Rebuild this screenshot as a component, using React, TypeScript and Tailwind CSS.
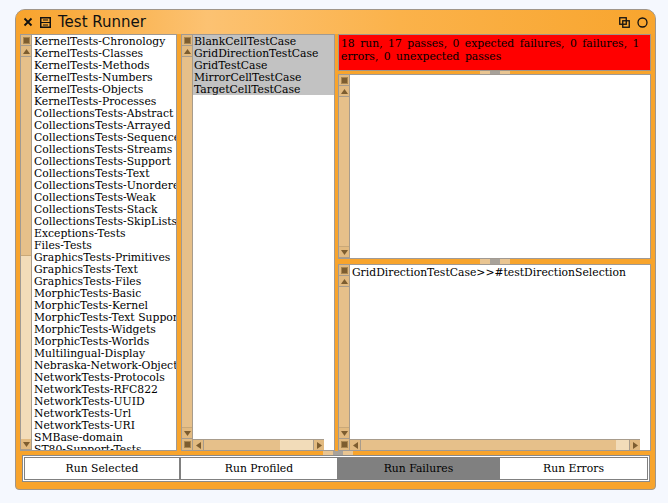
import React from 'react'

const categories = [
  'KernelTests-Chronology',
  'KernelTests-Classes',
  'KernelTests-Methods',
  'KernelTests-Numbers',
  'KernelTests-Objects',
  'KernelTests-Processes',
  'CollectionsTests-Abstract',
  'CollectionsTests-Arrayed',
  'CollectionsTests-Sequenceable',
  'CollectionsTests-Streams',
  'CollectionsTests-Support',
  'CollectionsTests-Text',
  'CollectionsTests-Unordered',
  'CollectionsTests-Weak',
  'CollectionsTests-Stack',
  'CollectionsTests-SkipLists',
  'Exceptions-Tests',
  'Files-Tests',
  'GraphicsTests-Primitives',
  'GraphicsTests-Text',
  'GraphicsTests-Files',
  'MorphicTests-Basic',
  'MorphicTests-Kernel',
  'MorphicTests-Text Support',
  'MorphicTests-Widgets',
  'MorphicTests-Worlds',
  'Multilingual-Display',
  'Nebraska-Network-Objects',
  'NetworkTests-Protocols',
  'NetworkTests-RFC822',
  'NetworkTests-UUID',
  'NetworkTests-Url',
  'NetworkTests-URI',
  'SMBase-domain',
  'ST80-Support-Tests',
]

const classes = [
  'BlankCellTestCase',
  'GridDirectionTestCase',
  'GridTestCase',
  'MirrorCellTestCase',
  'TargetCellTestCase',
]

const font = "font-['DejaVu_Serif',serif] text-[10.8px] leading-[12px] text-black"

type Glyph = 'square' | 'up' | 'down' | 'left' | 'right'

function Icon({ kind }: { kind: Glyph }) {
  if (kind === 'square')
    return (
      <svg width="7" height="7" viewBox="0 0 7 7">
        <rect x="0.5" y="0.5" width="6" height="6" fill="#7d5d2f" stroke="#a98650" />
      </svg>
    )
  const pts = {
    up: '0,6 3.5,1 7,6',
    down: '0,1 3.5,6 7,1',
    left: '6,0 1,3.5 6,7',
    right: '1,0 6,3.5 1,7',
  }[kind]
  return (
    <svg width="7" height="7" viewBox="0 0 7 7">
      <polygon points={pts} fill="#7d5d2f" />
    </svg>
  )
}

function VBtn({ kind }: { kind: Glyph }) {
  return (
    <div className="h-[11px] w-full shrink-0 flex items-center justify-center bg-[#e2ba80] border-b border-[#a89c8c]">
      <Icon kind={kind} />
    </div>
  )
}

function HBtn({ kind }: { kind: Glyph }) {
  return (
    <div className="w-[11px] h-full shrink-0 flex items-center justify-center bg-[#e2ba80] border-r border-[#a89c8c]">
      <Icon kind={kind} />
    </div>
  )
}

// thumb: fraction of the track shown dark (the rest is the lighter track)
function VScroll({ thumb = 1, corner = false }: { thumb?: number; corner?: boolean }) {
  return (
    <div className="w-[11px] shrink-0 flex flex-col bg-[#e6c08a] border-r border-[#a89c8c]">
      <VBtn kind="square" />
      <VBtn kind="up" />
      <div className="flex-1 flex flex-col">
        <div className="bg-[#e6c08a] border-b border-[#c9a878]" style={{ flexGrow: thumb }} />
        <div className="bg-[#f2dcb9]" style={{ flexGrow: 1 - thumb }} />
      </div>
      <VBtn kind="down" />
      {corner && <div className="h-[11px] shrink-0 flex items-center justify-center bg-[#e2ba80]"><Icon kind="square" /></div>}
    </div>
  )
}

function HScroll({ thumb }: { thumb: number }) {
  return (
    <div className="h-[11px] shrink-0 flex bg-white">
      <div className="flex-1 flex bg-[#e6c08a] border-t border-[#a89c8c]">
        <HBtn kind="left" />
        <div className="flex-1 flex">
          <div className="bg-[#e6c08a]" style={{ flexGrow: thumb }} />
          <div className="bg-[#f2dcb9]" style={{ flexGrow: 1 - thumb }} />
        </div>
        <div className="w-[11px] h-full flex items-center justify-center bg-[#e2ba80] border-l border-[#a89c8c]">
          <Icon kind="right" />
        </div>
      </div>
      <div className="w-[10px] bg-white" />
    </div>
  )
}

function VSplit() {
  return (
    <div className="flex flex-col justify-center">
      <div className="h-[8px] bg-[#e9c592]" />
      <div className="h-[10px] bg-[#a8a29a]" />
      <div className="h-[8px] bg-[#e9c592]" />
    </div>
  )
}

function HSplit({ w }: { w: string }) {
  return (
    <div className={`flex justify-center ${w}`}>
      <div className="flex h-full">
        <div className="w-[10px] bg-[#e9c592]" />
        <div className="w-[10px] bg-[#a8a29a]" />
        <div className="w-[10px] bg-[#e9c592]" />
      </div>
    </div>
  )
}

function TitleBar() {
  return (
    <div className="h-[24px] shrink-0 flex items-center rounded-t-[9px] bg-[linear-gradient(to_right,#f8a32c_0%,#fcc272_30%,#fbb24a_60%,#f8a52e_100%)]">
      <svg className="ml-[7px]" width="10" height="10" viewBox="0 0 10 10">
        <path d="M1.5 1.5 L8.5 8.5 M8.5 1.5 L1.5 8.5" stroke="#111" strokeWidth="1.8" />
      </svg>
      <svg className="ml-[7px]" width="11" height="11" viewBox="0 0 11 11">
        <rect x="0.75" y="0.75" width="9.5" height="9.5" fill="none" stroke="#111" strokeWidth="1.5" />
        <path d="M1 5.5 H10 M3 3 H8 M3 8 H8" stroke="#111" strokeWidth="1.2" />
      </svg>
      <span className="ml-[7px] font-['DejaVu_Sans',sans-serif] text-[15px] leading-none text-[#111]">Test Runner</span>
      <div className="flex-1" />
      <svg width="11" height="11" viewBox="0 0 11 11">
        <rect x="0.75" y="0.75" width="6.5" height="6.5" fill="none" stroke="#111" strokeWidth="1.3" />
        <rect x="3.75" y="3.75" width="6.5" height="6.5" fill="none" stroke="#111" strokeWidth="1.3" />
      </svg>
      <svg className="ml-[7px] mr-[7px]" width="11" height="11" viewBox="0 0 11 11">
        <circle cx="5.5" cy="5.5" r="4.5" fill="none" stroke="#111" strokeWidth="1.3" />
      </svg>
    </div>
  )
}

export default function App() {
  return (
    <div className="w-[668px] h-[503px] bg-[#f5f8fe] pl-[15px] pt-[9px]">
      <div className="w-[641px] h-[481px] flex flex-col bg-[#f8a42c] border border-[#a0968a] rounded-t-[10px] rounded-b-[4px]">
        <TitleBar />

        <div className="h-[417px] flex pl-[4px]">
          {/* categories */}
          <div className="w-[157px] flex bg-white border border-[#a09a94]">
            <VScroll thumb={0.52} />
            <div className={`flex-1 overflow-hidden pl-[2px] pt-[1px] ${font}`}>
              {categories.map((c) => (
                <div key={c} className="whitespace-nowrap">{c}</div>
              ))}
            </div>
          </div>

          <div className="w-[4px] flex items-center"><VSplit /></div>

          {/* classes */}
          <div className="w-[154px] flex bg-white border border-[#a09a94]">
            <VScroll corner />
            <div className="flex-1 flex flex-col min-w-0">
              <div className={`flex-1 overflow-hidden ${font}`}>
                {classes.map((c, i) => (
                  <div key={c} className={`whitespace-nowrap bg-[#c2c2c2] pl-[1px] ${i === 0 ? 'pt-[1px]' : ''} ${i === classes.length - 1 ? 'h-[11px]' : ''}`}>{c}</div>
                ))}
              </div>
              <HScroll thumb={0.7} />
            </div>
          </div>

          <div className="w-[3px] flex items-center"><VSplit /></div>

          {/* results */}
          <div className="w-[313px] flex flex-col">
            <div className={`h-[37px] bg-[#ff0000] border border-[#a0968a] pl-[2px] pt-[2px] ${font} text-[#2a0000] leading-[13px] [word-spacing:2px]`}>
              18 run, 17 passes, 0 expected failures, 0 failures, 1 errors, 0 unexpected passes
            </div>
            <HSplit w="h-[3px]" />
            <div className="h-[185px] flex bg-white border border-[#a09a94]">
              <VScroll />
              <div className="flex-1" />
            </div>
            <HSplit w="h-[5px]" />
            <div className="h-[187px] flex bg-white border border-[#a09a94]">
              <VScroll corner />
              <div className="flex-1 flex flex-col min-w-0">
                <div className={`flex-1 overflow-hidden pl-[2px] pt-[2px] ${font}`}>
                  GridDirectionTestCase&gt;&gt;#testDirectionSelection
                </div>
                <HScroll thumb={0.95} />
              </div>
            </div>
          </div>
        </div>

        <div className="h-[4px] flex justify-center pl-[4px]">
          <div className="flex h-full">
            <div className="w-[10px] bg-[#e9c592]" />
            <div className="w-[10px] bg-[#a8a29a]" />
            <div className="w-[10px] bg-[#e9c592]" />
          </div>
        </div>

        <div className="ml-[6px] w-[628px] h-[27px] flex bg-white border border-[#8a8a8a] p-[1px]">
          {[
            ['Run Selected', 'w-[156px] bg-white'],
            ['Run Profiled', 'w-[158px] bg-white'],
            ['Run Failures', 'w-[161px] bg-[#808080]'],
            ['Run Errors', 'w-[149px] bg-white'],
          ].map(([label, cls]) => (
            <div
              key={label}
              className={`${cls} h-full flex items-center justify-center border border-[#808080] ${font}`}
            >
              {label}
            </div>
          ))}
        </div>
      </div>
    </div>
  )
}
